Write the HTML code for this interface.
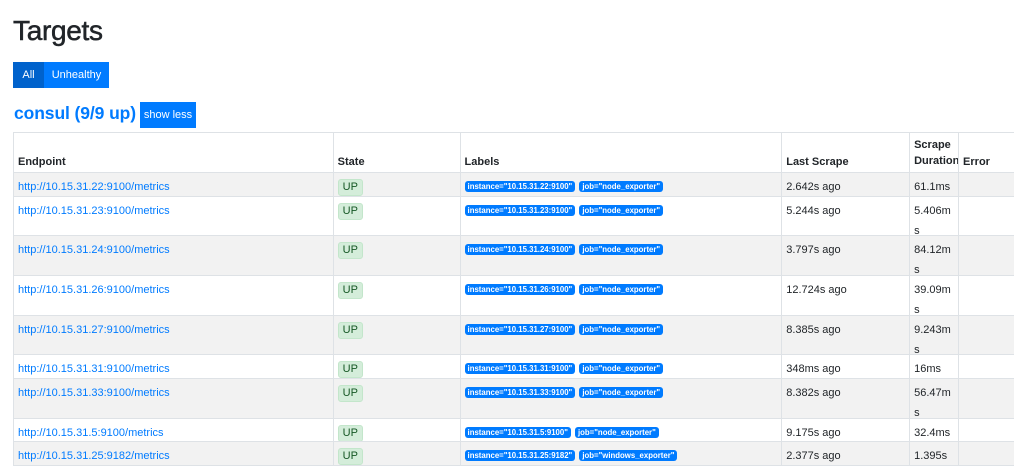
<!DOCTYPE html>
<html><head><meta charset="utf-8"><style>
*{box-sizing:border-box;margin:0;padding:0}
body{width:1014px;height:471px;overflow:hidden;background:#fff;font-family:"Liberation Sans",sans-serif;color:#212529;font-size:11px;position:relative}
h1{position:absolute;left:13px;top:15px;font-size:28px;font-weight:normal;letter-spacing:-0.3px;-webkit-text-stroke:0.5px #212529}
.btn{position:absolute;top:62px;height:26px;line-height:26px;color:#fff;font-size:11px;text-align:center;background:#007bff}
h2{position:absolute;left:14px;top:103px;font-size:17.5px;font-weight:bold;color:#007bff;white-space:nowrap;letter-spacing:-0.1px}
.sl{position:absolute;left:140px;top:102px;width:56px;height:26px;line-height:26px;background:#007bff;color:#fff;font-size:11px;text-align:center}
.tbl{position:absolute;left:13px;top:132px;width:1010px;border-top:1px solid #dee2e6;border-left:1px solid #dee2e6}
.r{display:flex;border-bottom:1px solid #dee2e6}
.r.g{background:#f2f2f2}
.c{border-right:1px solid #dee2e6;padding:4px 4px 0;line-height:20px;overflow:hidden;white-space:nowrap}
.c1{width:320px}.c2{width:127px}.c3{width:322px}.c4{width:128px}.c5{width:49px;white-space:normal;word-break:break-all;padding-right:6px}.c6{width:64px;border-right:none}
.h .c{font-weight:bold;padding-top:19px}
.h .c5{padding-top:4px;line-height:16px}
a{color:#007bff;text-decoration:none}
.up{display:inline-block;background:#d4edda;border:1px solid #c3e6cb;color:#155724;border-radius:3px;padding:0 4px;line-height:15px;font-size:11px;margin-top:1px}
.b{display:inline-block;background:#007bff;color:#fff;font-size:7.8px;font-weight:bold;border-radius:3px;padding:0 3px;line-height:11px;margin-right:1px;vertical-align:top;margin-top:4px}
</style></head><body>
<h1>Targets</h1>
<div class="btn" style="left:13px;width:31px;background:#0062cc">All</div>
<div class="btn" style="left:44px;width:65px">Unhealthy</div>
<h2>consul (9/9 up)</h2>
<div class="sl">show less</div>
<div class="tbl">
<div class="r h" style="height:40px"><div class="c c1">Endpoint</div><div class="c c2">State</div><div class="c c3">Labels</div><div class="c c4">Last Scrape</div><div class="c c5" style="word-break:normal">Scrape Duration</div><div class="c c6">Error</div></div>
<div class="r g" style="height:24px"><div class="c c1"><a>http://10.15.31.22:9100/metrics</a></div><div class="c c2"><span class="up">UP</span></div><div class="c c3"><span class="b">instance="10.15.31.22:9100"</span> <span class="b">job="node_exporter"</span></div><div class="c c4">2.642s ago</div><div class="c c5">61.1ms</div><div class="c c6"></div></div>
<div class="r" style="height:39px"><div class="c c1"><a>http://10.15.31.23:9100/metrics</a></div><div class="c c2"><span class="up">UP</span></div><div class="c c3"><span class="b">instance="10.15.31.23:9100"</span> <span class="b">job="node_exporter"</span></div><div class="c c4">5.244s ago</div><div class="c c5">5.406ms</div><div class="c c6"></div></div>
<div class="r g" style="height:40px"><div class="c c1"><a>http://10.15.31.24:9100/metrics</a></div><div class="c c2"><span class="up">UP</span></div><div class="c c3"><span class="b">instance="10.15.31.24:9100"</span> <span class="b">job="node_exporter"</span></div><div class="c c4">3.797s ago</div><div class="c c5">84.12ms</div><div class="c c6"></div></div>
<div class="r" style="height:40px"><div class="c c1"><a>http://10.15.31.26:9100/metrics</a></div><div class="c c2"><span class="up">UP</span></div><div class="c c3"><span class="b">instance="10.15.31.26:9100"</span> <span class="b">job="node_exporter"</span></div><div class="c c4">12.724s ago</div><div class="c c5">39.09ms</div><div class="c c6"></div></div>
<div class="r g" style="height:39px"><div class="c c1"><a>http://10.15.31.27:9100/metrics</a></div><div class="c c2"><span class="up">UP</span></div><div class="c c3"><span class="b">instance="10.15.31.27:9100"</span> <span class="b">job="node_exporter"</span></div><div class="c c4">8.385s ago</div><div class="c c5">9.243ms</div><div class="c c6"></div></div>
<div class="r" style="height:24px"><div class="c c1"><a>http://10.15.31.31:9100/metrics</a></div><div class="c c2"><span class="up">UP</span></div><div class="c c3"><span class="b">instance="10.15.31.31:9100"</span> <span class="b">job="node_exporter"</span></div><div class="c c4">348ms ago</div><div class="c c5">16ms</div><div class="c c6"></div></div>
<div class="r g" style="height:40px"><div class="c c1"><a>http://10.15.31.33:9100/metrics</a></div><div class="c c2"><span class="up">UP</span></div><div class="c c3"><span class="b">instance="10.15.31.33:9100"</span> <span class="b">job="node_exporter"</span></div><div class="c c4">8.382s ago</div><div class="c c5">56.47ms</div><div class="c c6"></div></div>
<div class="r" style="height:23px"><div class="c c1"><a>http://10.15.31.5:9100/metrics</a></div><div class="c c2"><span class="up">UP</span></div><div class="c c3"><span class="b">instance="10.15.31.5:9100"</span> <span class="b">job="node_exporter"</span></div><div class="c c4">9.175s ago</div><div class="c c5">32.4ms</div><div class="c c6"></div></div>
<div class="r g" style="height:24px"><div class="c c1"><a>http://10.15.31.25:9182/metrics</a></div><div class="c c2"><span class="up">UP</span></div><div class="c c3"><span class="b">instance="10.15.31.25:9182"</span> <span class="b">job="windows_exporter"</span></div><div class="c c4">2.377s ago</div><div class="c c5">1.395s</div><div class="c c6"></div></div>
</div>
</body></html>
